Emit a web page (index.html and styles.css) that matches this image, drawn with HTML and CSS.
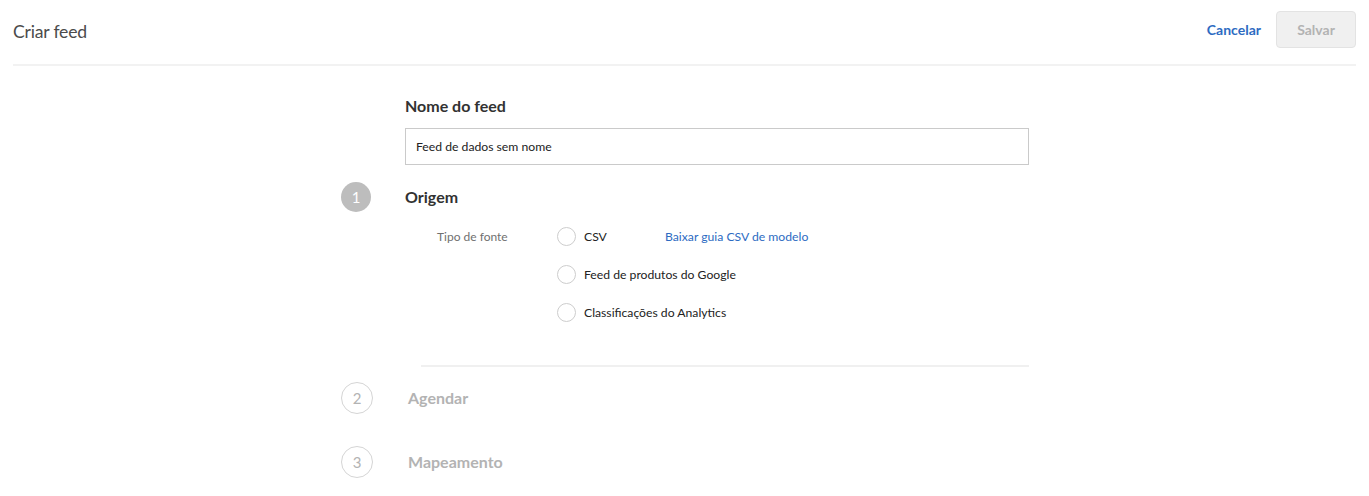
FILE: index.html
```html
<!DOCTYPE html>
<html lang="pt">
<head>
<meta charset="utf-8">
<title>Criar feed</title>
<link rel="stylesheet" href="styles.css">
</head>
<body>
<header class="topbar">
  <h1 class="title">Criar feed</h1>
  <div class="actions">
    <a class="cancel" href="#">Cancelar</a>
    <button class="save" disabled>Salvar</button>
  </div>
</header>
<main class="wizard">
  <div class="gutter"></div>
  <div class="content">
    <label class="field-label" for="name">Nome do feed</label>
    <input id="name" class="text-input" type="text" value="Feed de dados sem nome">
  </div>

  <div class="gutter"><span class="step active">1</span></div>
  <div class="content">
    <h2 class="step-title">Origem</h2>
    <div class="source">
      <span class="source-label">Tipo de fonte</span>
      <div class="options">
        <div class="option">
          <span class="radio"></span><span class="opt-text csv">CSV</span>
          <a class="link" href="#">Baixar guia CSV de modelo</a>
        </div>
        <div class="option"><span class="radio"></span><span class="opt-text">Feed de produtos do Google</span></div>
        <div class="option"><span class="radio"></span><span class="opt-text">Classificações do Analytics</span></div>
      </div>
    </div>
    <hr class="divider">
  </div>

  <div class="gutter"><span class="step">2</span></div>
  <div class="content"><h2 class="step-title muted">Agendar</h2></div>

  <div class="gutter gap"><span class="step">3</span></div>
  <div class="content gap"><h2 class="step-title muted">Mapeamento</h2></div>
</main>
</body>
</html>
```

FILE: styles.css
```css
* { box-sizing: border-box; }
body {
  margin: 0;
  font-family: Lato, "Open Sans", "Liberation Sans", sans-serif;
  color: #323232;
  background: #fff;
}
.topbar {
  margin: 0 13px;
  height: 66px;
  border-bottom: 2px solid #f2f2f2;
  display: flex;
  align-items: center;
  justify-content: space-between;
  padding-bottom: 5px;
}
.title {
  margin: 3px 0 0;
  font-size: 17.6px;
  font-weight: 400;
  color: #4b4b4b;
  letter-spacing: -0.2px;
}
.actions {
  display: flex;
  align-items: center;
  gap: 15px;
}
.cancel {
  color: #2d6bc2;
  font-weight: 700;
  font-size: 14px;
  text-decoration: none;
}
.save {
  width: 80px;
  height: 37px;
  border: 1px solid #e3e3e3;
  background: #f0f0f0;
  border-radius: 4px;
  color: #b3b3b3;
  font-family: inherit;
  font-weight: 700;
  font-size: 14px;
}
.wizard {
  display: grid;
  grid-template-columns: 64px 624px;
  margin-left: 341px;
  padding-top: 30px;
}
.gutter { display: flex; align-items: flex-start; }
.field-label {
  display: block;
  font-weight: 700;
  font-size: 16px;
  line-height: 20px;
  color: #323232;
  margin-bottom: 12px;
}
.text-input {
  width: 624px;
  height: 37px;
  border: 1px solid #cacaca;
  border-radius: 0;
  padding: 0 10px;
  font-family: inherit;
  font-size: 12.2px;
  color: #222;
  outline: none;
}
.step {
  border-radius: 50%;
  display: flex;
  align-items: center;
  justify-content: center;
  font-size: 15px;
  color: #b3b3b3;
  border: 1px solid #d5d5d5;
  width: 32px;
  height: 32px;
}
.step.active {
  width: 30px;
  height: 30px;
  background: #bdbdbd;
  border: none;
  color: #fff;
}
.gutter:nth-child(3), .content:nth-child(4) { margin-top: 17px; }
.step-title {
  margin: 0;
  font-size: 16px;
  font-weight: 700;
  line-height: 30px;
  color: #323232;
}
.step-title.muted {
  color: #b3b3b3;
  line-height: 32px;
  padding-left: 3px;
}
.source {
  display: flex;
  margin-top: 15px;
  padding-left: 32px;
}
.source-label {
  width: 120px;
  font-size: 12px;
  color: #707070;
  line-height: 19px;
}
.options {
  display: flex;
  flex-direction: column;
  gap: 19px;
}
.option {
  display: flex;
  align-items: center;
  height: 19px;
}
.radio {
  width: 19px;
  height: 19px;
  border: 1px solid #cdcdcd;
  border-radius: 50%;
  background: #fff;
  margin-right: 8px;
  flex: none;
}
.opt-text {
  font-size: 12.2px;
  color: #222;
}
.opt-text.csv { width: 81px; }
.link {
  font-size: 12.2px;
  color: #2d6bc2;
  text-decoration: none;
}
.divider {
  margin: 43px 0 15px 16px;
  border: none;
  border-top: 2px solid #f0f0f0;
}
.gap { margin-top: 32px; }
```
